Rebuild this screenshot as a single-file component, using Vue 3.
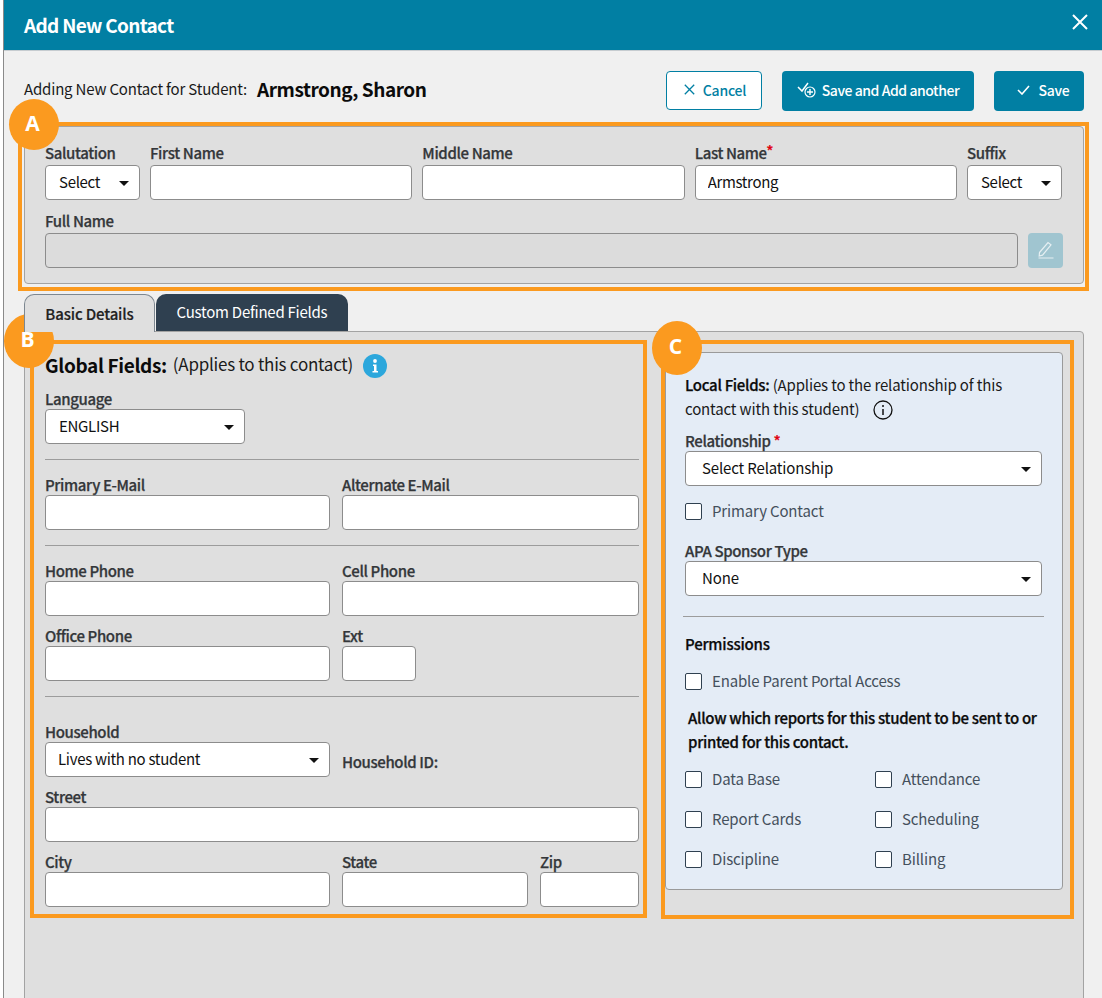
<script setup>
const badges = [
  { id: 'a', text: 'A' },
  { id: 'b', text: 'B' },
  { id: 'c', text: 'C' },
]
const reports = ['Data Base', 'Attendance', 'Report Cards', 'Scheduling', 'Discipline', 'Billing']
</script>

<template>
  <div class="page">
    <div class="modal">
      <header class="head">
        <h1>Add New Contact</h1>
        <svg class="close" width="16" height="16" viewBox="0 0 16 16"><path d="M1 1l14 14M15 1L1 15" stroke="#fff" stroke-width="2" fill="none" /></svg>
      </header>

      <div class="info">
        <span class="info-label">Adding New Contact for Student:</span>
        <strong class="student">Armstrong, Sharon</strong>
        <div class="actions">
          <button class="btn outline">
            <svg width="11" height="11" viewBox="0 0 11 11"><path d="M.8.8l9.400 9.400M10.200.8L.8 10.200" stroke="#017fa3" stroke-width="1.300" fill="none" /></svg>
            Cancel
          </button>
          <button class="btn solid add">
            <svg width="20" height="18" viewBox="0 0 20 18"><path d="M1 6l4 4 6-8" stroke="#fff" stroke-width="1.500" fill="none" /><circle cx="13" cy="11" r="5" fill="#017fa3" stroke="#fff" stroke-width="1.200" /><path d="M13 8v6M10 11h6" stroke="#fff" stroke-width="1.400" /></svg>
            Save and Add another
          </button>
          <button class="btn solid save">
            <svg width="13" height="10" viewBox="0 0 13 10"><path d="M1 5l4 4 7-8" stroke="#fff" stroke-width="1.600" fill="none" /></svg>
            Save
          </button>
        </div>
      </div>

      <section class="names">
        <div class="name-row">
          <div class="field w-sm"><label>Salutation</label><div class="select"><span>Select</span><i class="caret" /></div></div>
          <div class="field grow"><label>First Name</label><input /></div>
          <div class="field grow"><label>Middle Name</label><input /></div>
          <div class="field grow"><label>Last Name<em class="req-tight">*</em></label><input value="Armstrong" /></div>
          <div class="field w-sm"><label>Suffix</label><div class="select"><span>Select</span><i class="caret" /></div></div>
        </div>
        <div class="field full-field">
          <label>Full Name</label>
          <div class="full-row">
            <input class="disabled" disabled />
            <button class="pen">
              <svg width="20" height="19" viewBox="0 0 20 19"><path d="M3.500 11.500L12 1.500l3 2.400-8.500 10.300-3.300.8zM2.500 17h15" stroke="#e6eff2" stroke-width="1.200" fill="none" /></svg>
            </button>
          </div>
        </div>
      </section>

      <nav class="tabs">
        <div class="tab active">Basic Details</div>
        <div class="tab dark">Custom Defined Fields</div>
      </nav>

      <section class="tab-panel">
        <div class="global">
          <div class="global-title">
            <strong>Global Fields:</strong>
            <span>(Applies to this contact)</span>
            <svg width="24" height="24" viewBox="0 0 24 24"><circle cx="12" cy="12" r="12" fill="#2ca7dc" /><path d="M10 10.500h3.500V17H15v1.500H9.500V17H11v-5H10z" fill="#fff" /><circle cx="12" cy="7" r="1.900" fill="#fff" /></svg>
          </div>
          <div class="field tight lang"><label>Language</label><div class="select"><span>ENGLISH</span><i class="caret" /></div></div>
          <hr />
          <div class="cols two">
            <div class="field tight"><label>Primary E-Mail</label><input /></div>
            <div class="field tight"><label>Alternate E-Mail</label><input /></div>
          </div>
          <hr />
          <div class="cols two">
            <div class="field tight"><label>Home Phone</label><input /></div>
            <div class="field tight"><label>Cell Phone</label><input /></div>
          </div>
          <div class="cols two stacked">
            <div class="field tight"><label>Office Phone</label><input /></div>
            <div class="field tight"><label>Ext</label><input class="ext" /></div>
          </div>
          <hr class="before-house" />
          <div class="cols two">
            <div class="field tight"><label>Household</label><div class="select"><span class="house">Lives with no student</span><i class="caret" /></div></div>
            <div class="house-id">Household ID:</div>
          </div>
          <div class="field tight stacked"><label>Street</label><input /></div>
          <div class="cols address stacked">
            <div class="field tight"><label>City</label><input /></div>
            <div class="field tight"><label>State</label><input /></div>
            <div class="field tight"><label>Zip</label><input /></div>
          </div>
        </div>

        <aside class="local">
          <p class="local-title">
            <strong>Local Fields:</strong> <span>(Applies to the relationship of this contact with this student)</span>
            <svg class="outline-info" width="20" height="20" viewBox="0 0 20 20"><circle cx="10" cy="10" r="9" fill="none" stroke="#111" stroke-width="1.300" /><path d="M10 9v6" stroke="#111" stroke-width="1.500" /><circle cx="10" cy="6" r="1" fill="#111" /></svg>
          </p>
          <div class="field tight"><label>Relationship <em>*</em></label><div class="select wide"><span>Select Relationship</span><i class="caret" /></div></div>
          <label class="check primary"><i class="box" />Primary Contact</label>
          <div class="field tight"><label>APA Sponsor Type</label><div class="select wide"><span>None</span><i class="caret" /></div></div>
          <hr class="local-hr" />
          <div class="perm">Permissions</div>
          <label class="check portal"><i class="box" />Enable Parent Portal Access</label>
          <p class="allow">Allow which reports for this student to be sent to or printed for this contact.</p>
          <div class="report-grid">
            <label v-for="r in reports" :key="r" class="check"><i class="box" />{{ r }}</label>
          </div>
        </aside>
      </section>
    </div>

    <div class="frame frame-a" />
    <div class="frame frame-b" />
    <div class="frame frame-c" />
    <div v-for="b in badges" :key="b.id" class="badge" :class="'badge-' + b.id">{{ b.text }}</div>
  </div>
</template>

<style>
html, body { margin: 0; background: #fff; }
</style>

<style scoped>
* { box-sizing: border-box; }
.page {
  position: relative;
  width: 1102px;
  height: 998px;
  overflow: hidden;
  background: #fff;
  font-family: "Noto Sans CJK SC", "Noto Sans", sans-serif;
  font-size: 15px;
  line-height: 20px;
  letter-spacing: -0.15px;
  color: #111;
}
.modal {
  margin-left: 3px;
  height: 998px;
  background: #f0f0f0;
  border-left: 1px solid #8a8a8a;
  overflow: hidden;
}
.head {
  height: 51px;
  background: #017fa3;
  border-bottom: 1px solid #c6ccd0;
  display: flex;
  align-items: center;
  justify-content: space-between;
  padding: 0 14px 0 20px;
}
.head h1 { margin: 0; font-size: 19px; font-weight: 700; letter-spacing: -0.7px; color: #fff; line-height: 26px; }
.close { margin-top: -6px; }
.info {
  height: 75px;
  display: flex;
  padding: 20px 18px 0 20px;
}
.info-label { font-size: 15px; line-height: 36px; letter-spacing: -0.18px; color: #1a1a1a; margin-right: 10px; }
.student { font-size: 19px; line-height: 35px; font-weight: 700; letter-spacing: -0.45px; color: #0b0b0b; }
.actions { margin-left: auto; display: flex; gap: 20px; }
.btn {
  height: 40px;
  border-radius: 4px;
  font: inherit;
  font-size: 14px;
  font-weight: 500;
  letter-spacing: -0.2px;
  display: flex;
  align-items: center;
  justify-content: center;
  padding: 0 0 2px;
}
.outline { width: 96px; height: 39px; gap: 8px; padding-left: 2px; background: #fff; color: #017fa3; border: 1px solid #017fa3; }
.solid { background: #017fa3; color: #fff; border: 0; }
.add { width: 192px; gap: 5px; letter-spacing: -0.45px; }
.save { width: 90px; gap: 9px; padding-left: 8px; letter-spacing: -0.3px; }

.names {
  margin: 0 18px 0 20px;
  height: 158px;
  border: 1px solid #a3a3a3;
  border-radius: 4px;
  background: #dfdfdf;
  padding: 16px 20px 0;
}
.name-row { display: flex; gap: 10px; margin-right: 1px; }
.w-sm { width: 95px; flex: none; }
.grow { flex: 1; }
.field label {
  display: block;
  font-weight: 500;
  letter-spacing: -0.38px;
  -webkit-text-stroke: 0.25px #34373a;
  color: #34373a;
  margin-bottom: 2px;
  height: 20px;
  white-space: nowrap;
}
.field.tight label { margin-bottom: 0; }
.field em { color: #e0000f; -webkit-text-stroke: 0.25px #e0000f; font-style: normal; }
.req-tight { position: relative; top: -2px; }
input {
  display: block;
  width: 100%;
  height: 35px;
  border: 1px solid #8c8c8c;
  border-radius: 4px;
  background: #fff;
  font: inherit;
  letter-spacing: -0.35px;
  padding: 0 12px 2px;
  color: #111;
}
input.disabled { background: #dcdcdc; border-color: #8c8c8c; flex: 1; }
.select {
  height: 35px;
  border: 1px solid #8c8c8c;
  border-radius: 4px;
  background: #fff;
  display: flex;
  align-items: center;
  justify-content: space-between;
  padding: 0 10px 0 13px;
}
.select span { margin-top: -2px; letter-spacing: -0.3px; }
.select.wide { padding-left: 16px; }
.select.wide span { letter-spacing: -0.15px; }
.house { margin-left: -1px; }
.caret {
  width: 0;
  height: 0;
  border-left: 5px solid transparent;
  border-right: 5px solid transparent;
  border-top: 5px solid #111;
  margin-top: 2px;
}
.full-field { margin-top: 11px; }
.full-row { display: flex; gap: 10px; }
.pen {
  flex: none;
  width: 35px;
  height: 35px;
  border: 0;
  border-radius: 4px;
  background: #a0c5d0;
  padding: 0;
  display: flex;
  align-items: center;
  justify-content: center;
}

.tabs { display: flex; gap: 1px; margin: 10px 0 0 20px; height: 38px; position: relative; z-index: 1; }
.tab { border-radius: 10px 10px 0 0; height: 37px; font-weight: 500; text-align: center; }
.active {
  width: 131px;
  height: 38px;
  background: #dfdfdf;
  border: 1px solid #7d8790;
  border-bottom: 0;
  line-height: 38px;
  -webkit-text-stroke: 0.2px #222;
  color: #222;
}
.dark { width: 192px; background: #2f4050; color: #fff; line-height: 35px; font-weight: 400; letter-spacing: -0.25px; }

.tab-panel {
  margin: -1px 18px 0 20px;
  height: 700px;
  background: #dfdfdf;
  border: 1px solid #a3a3a3;
  border-radius: 4px 4px 0 0;
  padding: 20px 20px 0;
  display: flex;
  gap: 26px;
}
.global { width: 594px; flex: none; }
.global-title { height: 28px; display: flex; align-items: center; }
.global-title strong { font-size: 19px; font-weight: 700; letter-spacing: -0.35px; margin-top: -2px; color: #0b0b0b; }
.global-title span { font-size: 17px; letter-spacing: -0.25px; margin-left: 6px; margin-top: -5px; color: #1a1a1a; }
.global-title svg { margin-left: 10px; }
.lang { width: 200px; margin-top: 9px; }
hr { border: 0; border-top: 1px solid #9c9c9c; margin: 15px 0; }
hr.before-house { margin-bottom: 25px; }
.cols { display: grid; gap: 12px; }
.two { grid-template-columns: 285px 297px; }
.address { grid-template-columns: 285px 186px 99px; }
.stacked { margin-top: 10px; }
.ext { width: 74px; }
.house-id { font-weight: 500; letter-spacing: -0.38px; -webkit-text-stroke: 0.25px #34373a; color: #34373a; padding-top: 30px; }

.local {
  width: 398px;
  height: 538px;
  flex: none;
  background: #e4ecf6;
  border: 1px solid #9a9a9a;
  border-radius: 4px;
  padding: 20px 20px 0 19px;
}
.local-title { margin: 0 0 10px; line-height: 24px; color: #1a1a1a; height: 48px; }
.local-title strong { font-weight: 500; letter-spacing: -0.3px; -webkit-text-stroke: 0.25px #0b0b0b; color: #0b0b0b; }
.outline-info { vertical-align: -5px; margin-left: 14px; }
.check { display: flex; align-items: center; gap: 10px; height: 20px; color: #44505c; }
.box {
  width: 17px;
  height: 17px;
  background: #fff;
  border: 1px solid #2f4050;
  border-radius: 2px;
  flex: none;
}
.primary { margin: 15px 0 20px; }
.local-hr { margin: 20px -2px 17px; }
.perm { font-weight: 500; letter-spacing: -0.2px; -webkit-text-stroke: 0.25px #0b0b0b; color: #0b0b0b; }
.portal { margin-top: 17px; }
.allow { margin: 15px 0 15px 3px; line-height: 24px; font-weight: 500; letter-spacing: -0.32px; -webkit-text-stroke: 0.25px #0b0b0b; color: #0b0b0b; }
.report-grid { display: grid; grid-template-columns: 190px 1fr; row-gap: 20px; }

.frame { position: absolute; border: 4px solid #fb9a1f; pointer-events: none; }
.frame-a { left: 18px; top: 122px; width: 1071px; height: 169px; }
.frame-b { left: 30px; top: 340px; width: 617px; height: 578px; }
.frame-c { left: 661px; top: 340px; width: 413px; height: 579px; }
.badge {
  position: absolute;
  width: 50px;
  height: 54px;
  padding: 0 3px 5px 0;
  border-radius: 50%;
  background: #fb9a1f;
  color: #fff;
  font-family: "Open Sans", sans-serif;
  font-weight: 700;
  font-size: 21px;
  letter-spacing: 0;
  display: flex;
  align-items: center;
  justify-content: center;
}
.badge-a { left: 9px; top: 99px; height: 51px; padding-bottom: 3px; }
.badge-b { left: 4px; top: 314px; }
.badge-c { left: 652px; top: 321px; }
</style>
